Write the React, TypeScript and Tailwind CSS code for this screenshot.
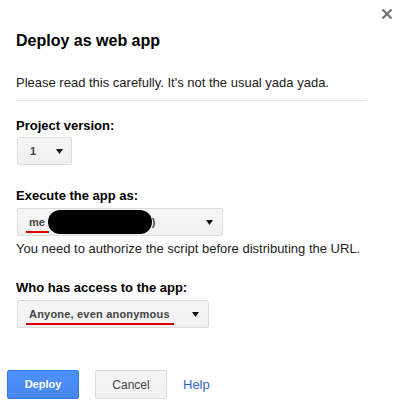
import React from "react";

function Arrow() {
  return (
    <svg width="7" height="5" viewBox="0 0 7 5" className="shrink-0">
      <path d="M0 0 L7 0 L3.5 5 Z" fill="#111" />
    </svg>
  );
}

export default function App() {
  return (
    <div
      className="relative w-[400px] h-[405px] bg-white text-[#222] overflow-hidden"
      style={{ fontFamily: '"Liberation Sans", Arial, sans-serif' }}
    >
      <button className="absolute left-[381px] top-[8px] w-[12px] h-[12px]">
        <svg width="12" height="12" viewBox="0 0 12 12">
          <path d="M1.5 1.5 L10.5 10.5 M10.5 1.5 L1.5 10.5" stroke="#777" strokeWidth="2.4" />
        </svg>
      </button>
      <div className="flex flex-col pl-[16px]">
        <div className="mt-[31px] text-[16px] leading-[20px] font-bold text-black">Deploy as web app</div>
        <div className="mt-[24px] text-[13px] leading-[16px]">
          Please read this carefully. It's not the usual yada yada.
        </div>
        <div className="mt-[9px] h-px w-[350px] bg-[#e5e5e5]" />

        <div className="mt-[17px] text-[13px] leading-[16px] font-bold text-black">Project version:</div>
        <div className="mt-[3px] ml-px w-[55px] h-[28px] flex items-center justify-between pl-[12px] pr-[8px] border border-[#dcdcdc] rounded-[2px] bg-gradient-to-b from-[#f5f5f5] to-[#f1f1f1] text-[11px] font-bold text-[#444]">
          <span>1</span>
          <Arrow />
        </div>

        <div className="mt-[23px] text-[13px] leading-[16px] font-bold text-black">Execute the app as:</div>
        <div className="relative mt-[4px] ml-px w-[206px] h-[28px] flex items-center justify-between pl-[11px] pr-[9px] border border-[#dcdcdc] rounded-[2px] bg-gradient-to-b from-[#f5f5f5] to-[#f1f1f1] text-[11px] font-bold text-[#444]">
          <span className="flex items-center">
            <span>me (</span>
            <span className="inline-block w-[104px] h-[24px] rounded-full bg-black -ml-[4px]" />
            <span>)</span>
          </span>
          <Arrow />
          <span className="absolute left-[8px] top-[22px] w-[23px] h-[2px] bg-[#d00]" />
        </div>
        <div className="mt-[5px] text-[13px] leading-[16px]">
          You need to authorize the script before distributing the URL.
        </div>

        <div className="mt-[23px] text-[13px] leading-[16px] font-bold text-black">Who has access to the app:</div>
        <div className="relative mt-[4px] ml-px w-[192px] h-[28px] flex items-center justify-between pl-[11px] pr-[9px] border border-[#dcdcdc] rounded-[2px] bg-gradient-to-b from-[#f5f5f5] to-[#f1f1f1] text-[11px] font-bold text-[#444]">
          <span className="tracking-[0.2px]">Anyone, even anonymous</span>
          <Arrow />
          <span className="absolute left-[8px] top-[22px] w-[148px] h-[2px] bg-[#d00]" />
        </div>

        <div className="mt-[42px] -ml-[9px] flex items-center">
          <button className="w-[72px] h-[29px] rounded-[2px] border border-[#3079ed] bg-gradient-to-b from-[#4d90fe] to-[#4787ed] text-white text-[11px] font-bold">
            Deploy
          </button>
          <button className="ml-[16px] w-[72px] h-[29px] rounded-[2px] border border-[#dcdcdc] bg-gradient-to-b from-[#f5f5f5] to-[#f1f1f1] text-[#444] text-[12px]">
            Cancel
          </button>
          <span className="ml-[16px] text-[13px] text-[#3366cc]">Help</span>
        </div>
      </div>
    </div>
  );
}
